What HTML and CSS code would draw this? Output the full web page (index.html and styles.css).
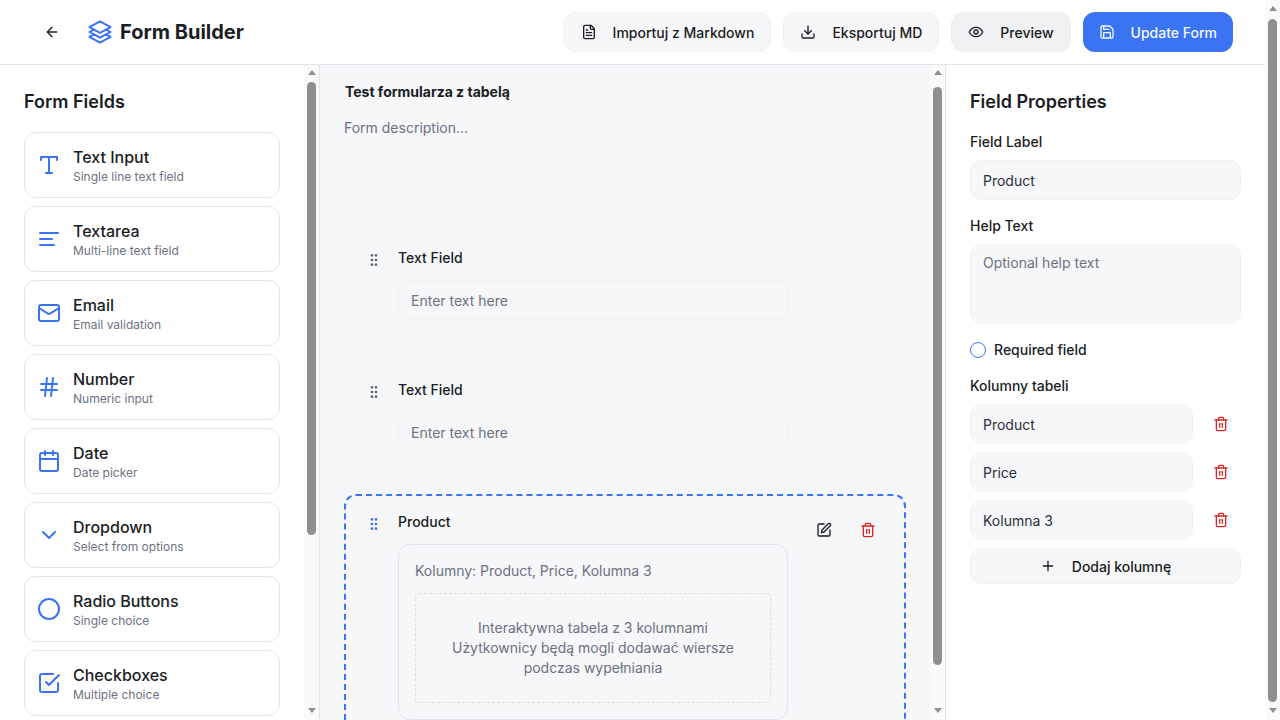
FILE: index.html
```html
<!DOCTYPE html>
<html lang="en">
<head>
    <meta charset="UTF-8">
    <meta name="viewport" content="width=device-width, initial-scale=1.0">
    <title>Form Builder</title>
    <link rel="stylesheet" href="styles.css">
</head>
<body>

<div class="page">
    <div class="page-main">
        <header class="topbar">
            <div class="topbar-left">
                <button class="back-btn">
                    <svg class="icon-16" viewBox="0 0 24 24"><path d="m12 19-7-7 7-7"/><path d="M19 12H5"/></svg>
                </button>
                <svg class="logo" viewBox="0 0 24 24"><path d="M6.429 9.75 2.25 12l4.179 2.25m0-4.5 5.571 3 5.571-3m-11.142 0L2.25 7.5 12 2.25l9.75 5.25-4.179 2.25m0 0L21.75 12l-4.179 2.25m0 0 4.179 2.25L12 21.75 2.25 16.5l4.179-2.25m11.142 0-5.571 3-5.571-3"/></svg>
                <h1 class="app-title">Form Builder</h1>
            </div>
            <div class="topbar-actions">
                <button class="btn">
                    <svg class="icon-16" viewBox="0 0 24 24"><path d="M15 2H6a2 2 0 0 0-2 2v16a2 2 0 0 0 2 2h12a2 2 0 0 0 2-2V7Z"/><path d="M14 2v4a2 2 0 0 0 2 2h4"/><path d="M16 13H8"/><path d="M16 17H8"/><path d="M10 9H8"/></svg>
                    Importuj z Markdown
                </button>
                <button class="btn">
                    <svg class="icon-16" viewBox="0 0 24 24"><path d="M21 15v4a2 2 0 0 1-2 2H5a2 2 0 0 1-2-2v-4"/><polyline points="7 10 12 15 17 10"/><line x1="12" x2="12" y1="15" y2="3"/></svg>
                    Eksportuj MD
                </button>
                <button class="btn btn-muted">
                    <svg class="icon-16" viewBox="0 0 24 24"><path d="M2 12s3.5-7 10-7 10 7 10 7-3.5 7-10 7-10-7-10-7Z"/><circle cx="12" cy="12" r="3"/></svg>
                    Preview
                </button>
                <button class="btn btn-primary">
                    <svg class="icon-16" viewBox="0 0 24 24"><path d="M19 21H5a2 2 0 0 1-2-2V5a2 2 0 0 1 2-2h11l5 5v11a2 2 0 0 1-2 2z"/><polyline points="17 21 17 13 7 13 7 21"/><polyline points="7 3 7 8 15 8"/></svg>
                    Update Form
                </button>
            </div>
        </header>

        <main class="workspace">
            <!-- Field palette -->
            <aside class="palette">
                <div class="palette-content">
                    <h2 class="panel-title">Form Fields</h2>
                    <div class="palette-list">
                        <div class="palette-item">
                            <svg class="icon-24" viewBox="0 0 24 24"><polyline points="4 7 4 4 20 4 20 7"/><line x1="9" x2="15" y1="20" y2="20"/><line x1="12" x2="12" y1="4" y2="20"/></svg>
                            <div><div class="item-name">Text Input</div><div class="item-hint">Single line text field</div></div>
                        </div>
                        <div class="palette-item">
                            <svg class="icon-24" viewBox="0 0 24 24"><line x1="21" x2="3" y1="6" y2="6"/><line x1="15" x2="3" y1="12" y2="12"/><line x1="17" x2="3" y1="18" y2="18"/></svg>
                            <div><div class="item-name">Textarea</div><div class="item-hint">Multi-line text field</div></div>
                        </div>
                        <div class="palette-item">
                            <svg class="icon-24" viewBox="0 0 24 24"><rect width="20" height="16" x="2" y="4" rx="2"/><path d="m22 7-8.97 5.7a1.94 1.94 0 0 1-2.06 0L2 7"/></svg>
                            <div><div class="item-name">Email</div><div class="item-hint">Email validation</div></div>
                        </div>
                        <div class="palette-item">
                            <svg class="icon-24" viewBox="0 0 24 24"><line x1="4" x2="20" y1="9" y2="9"/><line x1="4" x2="20" y1="15" y2="15"/><line x1="10" x2="8" y1="3" y2="21"/><line x1="16" x2="14" y1="3" y2="21"/></svg>
                            <div><div class="item-name">Number</div><div class="item-hint">Numeric input</div></div>
                        </div>
                        <div class="palette-item">
                            <svg class="icon-24" viewBox="0 0 24 24"><rect width="18" height="18" x="3" y="4" rx="2"/><line x1="16" x2="16" y1="2" y2="6"/><line x1="8" x2="8" y1="2" y2="6"/><line x1="3" x2="21" y1="10" y2="10"/></svg>
                            <div><div class="item-name">Date</div><div class="item-hint">Date picker</div></div>
                        </div>
                        <div class="palette-item">
                            <svg class="icon-24" viewBox="0 0 24 24"><path d="m6 9 6 6 6-6"/></svg>
                            <div><div class="item-name">Dropdown</div><div class="item-hint">Select from options</div></div>
                        </div>
                        <div class="palette-item">
                            <svg class="icon-24" viewBox="0 0 24 24"><circle cx="12" cy="12" r="10"/></svg>
                            <div><div class="item-name">Radio Buttons</div><div class="item-hint">Single choice</div></div>
                        </div>
                        <div class="palette-item">
                            <svg class="icon-24" viewBox="0 0 24 24"><path d="m9 11 3 3L22 4"/><path d="M21 12v7a2 2 0 0 1-2 2H5a2 2 0 0 1-2-2V5a2 2 0 0 1 2-2h11"/></svg>
                            <div><div class="item-name">Checkboxes</div><div class="item-hint">Multiple choice</div></div>
                        </div>
                    </div>
                </div>
                <div class="scrollbar">
                    <span class="arrow-up"></span>
                    <span class="thumb thumb-palette"></span>
                    <span class="arrow-down"></span>
                </div>
            </aside>

            <!-- Form canvas -->
            <section class="canvas">
                <div class="canvas-content">
                    <div class="form-title">Test formularza z tabelą</div>
                    <div class="form-desc">Form description...</div>

                    <div class="field-card">
                        <svg class="grip" viewBox="0 0 24 24"><circle cx="9" cy="12" r="1"/><circle cx="9" cy="5" r="1"/><circle cx="9" cy="19" r="1"/><circle cx="15" cy="12" r="1"/><circle cx="15" cy="5" r="1"/><circle cx="15" cy="19" r="1"/></svg>
                        <div class="field-body">
                            <div class="field-label">Text Field</div>
                            <div class="fake-input placeholder">Enter text here</div>
                        </div>
                    </div>

                    <div class="field-card">
                        <svg class="grip" viewBox="0 0 24 24"><circle cx="9" cy="12" r="1"/><circle cx="9" cy="5" r="1"/><circle cx="9" cy="19" r="1"/><circle cx="15" cy="12" r="1"/><circle cx="15" cy="5" r="1"/><circle cx="15" cy="19" r="1"/></svg>
                        <div class="field-body">
                            <div class="field-label">Text Field</div>
                            <div class="fake-input placeholder">Enter text here</div>
                        </div>
                    </div>

                    <div class="field-card selected">
                        <svg class="grip" viewBox="0 0 24 24"><circle cx="9" cy="12" r="1"/><circle cx="9" cy="5" r="1"/><circle cx="9" cy="19" r="1"/><circle cx="15" cy="12" r="1"/><circle cx="15" cy="5" r="1"/><circle cx="15" cy="19" r="1"/></svg>
                        <div class="field-body">
                            <div class="field-label">Product</div>
                            <div class="table-box">
                                <div class="table-cols">Kolumny: Product, Price, Kolumna 3</div>
                                <div class="table-note">
                                    <p>Interaktywna tabela z 3 kolumnami</p>
                                    <p>Użytkownicy będą mogli dodawać wiersze podczas wypełniania</p>
                                </div>
                            </div>
                        </div>
                        <div class="field-actions">
                            <button class="icon-btn">
                                <svg class="icon-16" viewBox="0 0 24 24"><path d="M12 3H5a2 2 0 0 0-2 2v14a2 2 0 0 0 2 2h14a2 2 0 0 0 2-2v-7"/><path d="M18.375 2.625a2.121 2.121 0 1 1 3 3L12 15l-4 1 1-4Z"/></svg>
                            </button>
                            <button class="icon-btn danger">
                                <svg class="icon-16" viewBox="0 0 24 24"><path d="M3 6h18"/><path d="M19 6v14a2 2 0 0 1-2 2H7a2 2 0 0 1-2-2V6"/><path d="M8 6V4a2 2 0 0 1 2-2h4a2 2 0 0 1 2 2v2"/><line x1="10" x2="10" y1="11" y2="17"/><line x1="14" x2="14" y1="11" y2="17"/></svg>
                            </button>
                        </div>
                    </div>
                </div>
                <div class="scrollbar">
                    <span class="arrow-up"></span>
                    <span class="thumb thumb-canvas"></span>
                    <span class="arrow-down"></span>
                </div>
            </section>

            <!-- Field properties -->
            <aside class="props">
                <h2 class="panel-title">Field Properties</h2>
                <label class="prop-label">Field Label</label>
                <div class="fake-input filled">Product</div>
                <label class="prop-label">Help Text</label>
                <div class="fake-textarea placeholder">Optional help text</div>
                <div class="required-row">
                    <span class="radio"></span>
                    <span>Required field</span>
                </div>
                <label class="prop-label">Kolumny tabeli</label>
                <div class="col-list">
                    <div class="col-row">
                        <div class="fake-input filled">Product</div>
                        <button class="icon-btn danger col-del">
                            <svg class="icon-16" viewBox="0 0 24 24"><path d="M3 6h18"/><path d="M19 6v14a2 2 0 0 1-2 2H7a2 2 0 0 1-2-2V6"/><path d="M8 6V4a2 2 0 0 1 2-2h4a2 2 0 0 1 2 2v2"/><line x1="10" x2="10" y1="11" y2="17"/><line x1="14" x2="14" y1="11" y2="17"/></svg>
                        </button>
                    </div>
                    <div class="col-row">
                        <div class="fake-input filled">Price</div>
                        <button class="icon-btn danger col-del">
                            <svg class="icon-16" viewBox="0 0 24 24"><path d="M3 6h18"/><path d="M19 6v14a2 2 0 0 1-2 2H7a2 2 0 0 1-2-2V6"/><path d="M8 6V4a2 2 0 0 1 2-2h4a2 2 0 0 1 2 2v2"/><line x1="10" x2="10" y1="11" y2="17"/><line x1="14" x2="14" y1="11" y2="17"/></svg>
                        </button>
                    </div>
                    <div class="col-row">
                        <div class="fake-input filled">Kolumna 3</div>
                        <button class="icon-btn danger col-del">
                            <svg class="icon-16" viewBox="0 0 24 24"><path d="M3 6h18"/><path d="M19 6v14a2 2 0 0 1-2 2H7a2 2 0 0 1-2-2V6"/><path d="M8 6V4a2 2 0 0 1 2-2h4a2 2 0 0 1 2 2v2"/><line x1="10" x2="10" y1="11" y2="17"/><line x1="14" x2="14" y1="11" y2="17"/></svg>
                        </button>
                    </div>
                    <button class="add-col">
                        <svg class="icon-16" viewBox="0 0 24 24"><path d="M5 12h14"/><path d="M12 5v14"/></svg>
                        Dodaj kolumnę
                    </button>
                </div>
            </aside>
        </main>
    </div>

    <div class="scrollbar scrollbar-page">
        <span class="arrow-up"></span>
        <span class="thumb thumb-page"></span>
        <span class="arrow-down"></span>
    </div>
</div>

</body>
</html>
```

FILE: styles.css
```css
* {
    box-sizing: border-box;
}

body {
    margin: 0;
    font-family: 'Inter', sans-serif;
    font-size: 14px;
    line-height: 20px;
    color: #1a1d23;
    background-color: #ffffff;
    overflow: hidden;
}

button {
    font-family: inherit;
    cursor: pointer;
}

svg {
    fill: none;
    stroke: currentColor;
    stroke-width: 2;
    stroke-linecap: round;
    stroke-linejoin: round;
    flex-shrink: 0;
}

.icon-16 {
    width: 16px;
    height: 16px;
}

.icon-24 {
    width: 24px;
    height: 24px;
    color: #3b74f2;
}

.page {
    display: flex;
    height: 100vh;
}

.page-main {
    flex: 1;
    min-width: 0;
    display: flex;
    flex-direction: column;
}

/* Scrollbars */
.scrollbar {
    width: 15px;
    flex-shrink: 0;
    display: flex;
    flex-direction: column;
    align-items: center;
    padding: 5px 0 7px;
    background-color: #fafafa;
}

.scrollbar-page {
    padding-top: 6px;
}

.arrow-up,
.arrow-down {
    width: 0;
    height: 0;
    border-left: 4.5px solid transparent;
    border-right: 4.5px solid transparent;
}

.arrow-up {
    border-bottom: 5px solid #8f8f8f;
}

.arrow-down {
    border-top: 5px solid #8f8f8f;
    margin-top: auto;
}

.thumb {
    width: 9px;
    background-color: #8f8f8f;
    border-radius: 4.5px;
}

.thumb-palette {
    height: 453px;
    margin-top: 7px;
}

.thumb-canvas {
    height: 578px;
    margin-top: 12px;
}

.thumb-page {
    height: 683px;
    margin-top: 8px;
}

/* Top bar */
.topbar {
    height: 65px;
    flex-shrink: 0;
    padding: 0 32px;
    display: flex;
    align-items: center;
    justify-content: space-between;
    border-bottom: 1px solid #e2e5ee;
}

.topbar-left {
    display: flex;
    align-items: center;
}

.back-btn {
    width: 40px;
    height: 40px;
    display: flex;
    align-items: center;
    justify-content: center;
    background: none;
    border: none;
    padding: 0;
    margin-right: 15px;
    color: #1a1d23;
}

.logo {
    width: 26px;
    height: 26px;
    color: #3b74f2;
    stroke-width: 1.8;
    margin-right: 7px;
}

.app-title {
    margin: 0;
    font-size: 20px;
    line-height: 28px;
    font-weight: 700;
}

.topbar-actions {
    display: flex;
    gap: 12px;
}

.btn {
    height: 40px;
    padding: 0 16px;
    display: flex;
    align-items: center;
    gap: 16px;
    font-size: 14px;
    font-weight: 500;
    color: #1a1d23;
    background-color: #f6f7f9;
    border: 1px solid #f0f1f4;
    border-radius: 12px;
}

.btn-muted {
    background-color: #f0f1f3;
    border-color: #f0f1f3;
}

.btn-primary {
    background-color: #3b74f2;
    border: none;
    color: #f2f6ff;
}

/* Three panels */
.workspace {
    flex: 1;
    min-height: 0;
    display: flex;
}

.palette {
    width: 320px;
    flex-shrink: 0;
    display: flex;
    border-right: 1px solid #e2e5ee;
}

.palette-content {
    flex: 1;
    min-width: 0;
    padding: 24px 24px 0;
    overflow: hidden;
}

.canvas {
    flex: 1;
    min-width: 0;
    display: flex;
    background-color: #f6f7f9;
    border-right: 1px solid #e2e5ee;
}

.canvas-content {
    flex: 1;
    min-width: 0;
    padding: 19px 24px 0;
    overflow: hidden;
}

.props {
    width: 319px;
    flex-shrink: 0;
    padding: 24px;
}

.panel-title {
    margin: 0 0 17px;
    font-size: 18px;
    line-height: 26px;
    font-weight: 600;
}

/* Palette items */
.palette-list {
    display: flex;
    flex-direction: column;
    gap: 8px;
}

.palette-item {
    height: 66px;
    flex-shrink: 0;
    padding: 0 12px;
    display: flex;
    align-items: center;
    gap: 12px;
    border: 1px solid #e2e5ee;
    border-radius: 12px;
    background-color: #ffffff;
}

.item-name {
    font-size: 16px;
    line-height: 24px;
    font-weight: 500;
}

.item-hint {
    font-size: 12px;
    line-height: 16px;
    color: #6b7280;
}

/* Canvas */
.form-title {
    font-size: 14px;
    line-height: 16px;
    font-weight: 700;
    padding-left: 1px;
}

.form-desc {
    margin: 18px 0 92px;
    color: #6b7280;
}

.field-card {
    display: flex;
    padding: 16px 18px 16px 20px;
    margin-bottom: 24px;
    border: 2px solid transparent;
    border-radius: 12px;
}

.field-card.selected {
    border: 2px dashed #3b74f2;
    margin-bottom: 0;
}

.grip {
    width: 16px;
    height: 16px;
    margin-top: 4px;
    margin-right: 16px;
    color: #5b6270;
}

.selected .grip {
    color: #3b74f2;
}

.field-body {
    width: 390px;
}

.field-label {
    font-weight: 500;
    margin-bottom: 12px;
}

.fake-input {
    height: 40px;
    padding: 1px 12px 0;
    display: flex;
    align-items: center;
    background-color: #f6f7f9;
    border: 1px solid #f0f1f4;
    border-radius: 12px;
}

.placeholder {
    color: #6b7280;
}

.filled {
    color: #2b2f38;
}

.table-box {
    height: 176px;
    padding: 16px;
    border: 1px solid #e2e5ee;
    border-radius: 12px;
}

.table-cols {
    color: #6b7280;
    margin-bottom: 12px;
}

.table-note {
    padding: 24px;
    text-align: center;
    color: #6b7280;
    border: 1px dashed #dcdfe5;
    border-radius: 4px;
}

.table-note p {
    margin: 0;
}

.field-actions {
    margin-left: auto;
    display: flex;
    gap: 8px;
}

.icon-btn {
    width: 36px;
    height: 36px;
    display: flex;
    align-items: center;
    justify-content: center;
    padding: 0;
    background: none;
    border: none;
    color: #1a1d23;
}

.icon-btn.danger {
    color: #dc2626;
}

/* Properties */
.prop-label {
    display: block;
    font-weight: 500;
    margin-bottom: 8px;
}

.fake-input + .prop-label {
    margin-top: 16px;
}

.fake-textarea {
    height: 80px;
    padding: 8px 12px;
    background-color: #f6f7f9;
    border: 1px solid #f0f1f4;
    border-radius: 12px;
}

.required-row {
    display: flex;
    align-items: center;
    gap: 8px;
    font-weight: 500;
    margin: 16px 0;
}

.radio {
    width: 16px;
    height: 16px;
    border: 1px solid #3b74f2;
    border-radius: 50%;
}

.col-list {
    display: flex;
    flex-direction: column;
    gap: 8px;
}

.col-row {
    display: flex;
    gap: 8px;
}

.col-row .fake-input {
    flex: 1;
}

.col-del {
    width: 40px;
    height: 40px;
}

.add-col {
    height: 36px;
    display: flex;
    align-items: center;
    justify-content: center;
    gap: 16px;
    font-size: 14px;
    font-weight: 500;
    color: #1a1d23;
    background-color: #f6f7f9;
    border: 1px solid #f0f1f4;
    border-radius: 12px;
}
```
